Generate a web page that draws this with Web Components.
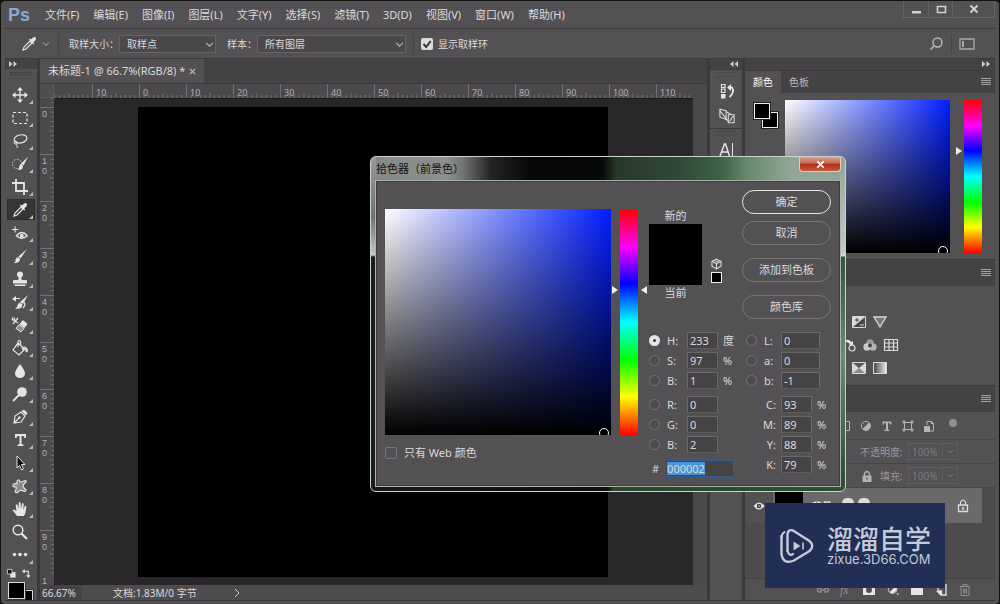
<!DOCTYPE html>
<html lang="zh-CN">
<head>
<meta charset="utf-8">
<title>Photoshop</title>
<style>
html{background:#141314}
body{margin:0;font:11px/16px "Noto Sans","Noto Sans CJK SC",sans-serif;color:#dcdadc;
--panel:#535154;--dark:#444245;--line:#3b393c;--field:#474548;--edge:#6a686b}
</style>
</head>
<body>
<ps-app>
  <ps-menubar slot="menu"></ps-menubar>
  <ps-options slot="options"></ps-options>
  <ps-tools></ps-tools>
  <ps-document></ps-document>
  <ps-dock></ps-dock>
  <ps-panels></ps-panels>
</ps-app>
<ps-picker-dialog heading="拾色器（前景色）"></ps-picker-dialog>
<site-badge></site-badge>
<script>
const ICONS={
 dropper:['0 0 16 16','<path d="M2 14l1-3 6-6 2 2-6 6z" fill="none" stroke="#e6e4e6" stroke-width="1.2"/><path d="M8 3.500l1-1 1 1 2-2q2-1 2.800.3t-.6 2.600l-2 2 1 1-1 1z" fill="#e6e4e6"/>'],
 move:['0 0 16 16','<path d="M8 1v14M1 8h14" stroke="#e6e4e6" stroke-width="1.300"/><path d="M8 0l3 3.500H5zM8 16l3-3.500H5zM0 8l3.500-3v6zM16 8l-3.500-3v6z" fill="#e6e4e6"/>'],
 marquee:['0 0 16 16','<rect x="1" y="2.500" width="14" height="11" fill="none" stroke="#e6e4e6" stroke-width="1.200" stroke-dasharray="3 2"/>'],
 lasso:['0 0 16 16','<ellipse cx="8.500" cy="6" rx="6.500" ry="4" transform="rotate(-12 8 6)" fill="none" stroke="#e6e4e6" stroke-width="1.200"/><path d="M3 8q-2 2 0 3t2-1-2-2M4 11q2 1 1 4" fill="none" stroke="#e6e4e6"/>'],
 quick:['0 0 16 16','<circle cx="5" cy="8" r="4.600" fill="none" stroke="#e6e4e6" stroke-dasharray="1.500 1.500"/><path d="M16 1l-4.500 8.500L9 7.500z" fill="#e6e4e6"/><path d="M8.500 8l2.500 2q0 4.500-5.500 4 2-1 1.500-3z" fill="#e6e4e6"/>'],
 crop:['0 0 16 16','<path d="M4 0v12h12M0 4h12v12" fill="none" stroke="#e6e4e6" stroke-width="1.800"/>'],
 heal:['0 0 18 16','<path d="M0 4h7M3.500 0.500v7" stroke="#e6e4e6" stroke-width="1.200"/><path d="M5 11q6-7 12 0-6 6-12 0z" fill="none" stroke="#e6e4e6" stroke-width="1.600"/><circle cx="11" cy="11" r="2.200" fill="#e6e4e6"/>'],
 brush:['0 0 16 16','<path d="M15 1L8.500 10.500 6.500 8.500z" fill="#e6e4e6"/><path d="M6 9l2 2q0 4.500-6.500 4Q4 14 3.500 11.500 4 9.500 6 9z" fill="#e6e4e6"/>'],
 stamp:['0 0 16 16','<circle cx="8" cy="3.500" r="3" fill="#e6e4e6"/><path d="M7 5h2l.7 4H14q1 0 1 1v2.500H1V10q0-1 1-1h4.300zM2.500 13.500h11V15h-11z" fill="#e6e4e6"/>'],
 history:['0 0 16 16','<path d="M16 1l-5 9-3-2z" fill="#e6e4e6"/><path d="M7.500 8.500l3 2q0 4.500-7.500 4.500 3-2 2.500-4z" fill="#e6e4e6"/><path d="M3 4.500h5M12 8q2 3-1 6" stroke="#e6e4e6" fill="none" stroke-width="1.200"/><path d="M0 5l4-3v5.500z" fill="#e6e4e6"/>'],
 eraser:['0 0 16 16','<path d="M0 2l6 4M6 1L1 7" stroke="#e6e4e6" stroke-width="1.200"/><circle cx="1.500" cy="2" r="1.400" fill="none" stroke="#e6e4e6"/><path d="M11 3l4.500 4-3 4L7.500 7z" fill="#e6e4e6"/><path d="M7 7.500l5 4-3 3.500-5-3.500z" fill="#8f8d8f" stroke="#e6e4e6"/>'],
 bucket:['0 0 16 16','<path d="M6 3l7 6-6 6-6-5zM6 7V1.500q1.500-2 2.500 0V6" fill="none" stroke="#e6e4e6" stroke-width="1.200"/><path d="M9 7l4 2-2 2zM12 6q5 2 3.500 6-2 1-2-1t-1.500-5z" fill="#e6e4e6"/>'],
 drop:['0 0 16 16','<path d="M8 1q5 6.500 5 9.500a5 4.500 0 01-10 0Q3 7.500 8 1z" fill="#e6e4e6"/>'],
 dodge:['0 0 16 16','<circle cx="10" cy="6" r="4.800" fill="#e6e4e6"/><path d="M7 9l-6 6" stroke="#e6e4e6" stroke-width="1.800"/>'],
 pen:['0 0 16 16','<path d="M2 14l1-7 6-4 4 4-4 6zM2 14l5-5" fill="none" stroke="#e6e4e6" stroke-width="1.200"/><path d="M9.500 2L12 .5 15.500 4 14 6.500z" fill="#e6e4e6"/><circle cx="7.500" cy="8.500" r="1.200" fill="#e6e4e6"/>'],
 type:['0 0 16 16','<path d="M3 2h11v4h-1.500q0-2-1.700-2H9.500v8.300l2 .4V14H5.500v-1.300l2-.4V4H6.200Q4.500 4 4.500 6H3z" fill="#e6e4e6"/>'],
 arrow:['0 0 16 16','<path d="M5 1l8 8.500H9.500L11.500 14l-2 1-2-4.500L5 13z" fill="#100f10" stroke="#e6e4e6"/>'],
 shape:['0 0 16 16','<path d="M5 3q2-3 3 1 2 0 4-1 3-1 2 1l-3 3q0 3 3 5 0 3-5 0-1 0-3 2t-3-1q2-3 1-4-4 0-3-2t4-1z" fill="#8b898b" stroke="#e6e4e6" stroke-width="1.100"/>'],
 hand:['0 0 16 16','<path d="M5 15Q3 12 .8 9.500q0-1.500 1.700-.8L4.500 10 3.700 4q.8-1.500 1.800 0L6.500 8 6.800 1.500q1-1.200 1.800 0L9 8l1-5.500q1-1 1.700.2L11.300 9l1.500-4q1.200-.6 1.500.5Q14 12 12 15z" fill="#e6e4e6"/>'],
 zoom:['0 0 16 16','<circle cx="6" cy="6" r="4.800" fill="none" stroke="#e6e4e6" stroke-width="1.500"/><path d="M9.500 9.500l5.500 5.500" stroke="#e6e4e6" stroke-width="2.200"/>'],
 more:['0 0 16 16','<circle cx="2.500" cy="7.500" r="1.800" fill="#e6e4e6"/><circle cx="8" cy="7.500" r="1.800" fill="#e6e4e6"/><circle cx="13.500" cy="7.500" r="1.800" fill="#e6e4e6"/>'],
 search:['0 0 16 16','<circle cx="9.500" cy="6.500" r="4.500" fill="none" stroke="#bbb9bb" stroke-width="1.400"/><path d="M6 10l-3.500 3.500" stroke="#bbb9bb" stroke-width="1.600"/>'],
 layout:['0 0 16 16','<path d="M1 3h14v10H1z" fill="none" stroke="#a9a7a9" stroke-width="1.300"/><path d="M3 5h2v6H3z" fill="#a9a7a9"/>'],
 chevron:['0 0 8 8','<path d="M1 2.500l3 3 3-3" fill="none" stroke="#b5b3b5"/>'],
 next:['0 0 8 12','<path d="M2 2l4 4-4 4" fill="none" stroke="#c9c7c9"/>'],
 check:['0 0 12 12','<path d="M2.500 6l2.700 3 4.500-6" fill="none" stroke="#3a383a" stroke-width="2"/>'],
 menu:['0 0 10 10','<path d="M0 1.500h10M0 3.500h10M0 5.500h10M0 7.500h10" stroke="#a5a3a5" shape-rendering="crispEdges"/>'],
 right:['0 0 8 6','<path d="M0 0v6l3.500-3zM4.500 0v6L8 3z" fill="#cfcdcf"/>'],
 left:['0 0 8 6','<path d="M3.500 0v6L0 3zM8 0v6L4.500 3z" fill="#cfcdcf"/>'],
 mini:['0 0 10 10','<path d="M3.500 3.500h6v6h-6z" fill="#e6e4e6"/><path d="M.5.500h5v5h-5z" fill="#111" stroke="#cfcdcf"/>'],
 swap:['0 0 10 10','<path d="M2 2.500h5V8" fill="none" stroke="#e6e4e6" stroke-width="1.300"/><path d="M0 2.500L3 0v5zM7 10L4.500 7h5z" fill="#e6e4e6"/>'],
 actions:['0 0 16 16','<path d="M2.500 1.500h3.500v3H2.500zM2.500 6h3.500v3.500H2.500z" fill="none" stroke="#e6e4e6" stroke-width="1.200"/><path d="M2 11h4.500v4.500H2z" fill="#e6e4e6"/><path d="M9 4.500h4Q16 9 10.500 14" fill="none" stroke="#e6e4e6" stroke-width="1.800"/><path d="M8 4.500L12 1v7z" fill="#e6e4e6"/>'],
 swatches:['0 0 18 18','<path d="M1 1.500l7 1.500v10l-7-3zM10.500 7.500h6.500v9h-6.500zM8 4l6 3.500M1 3l7 9 3 4M12 15l4-6" fill="none" stroke="#dcdadc" stroke-width="1.200"/>'],
 glyph:['0 0 16 16','<path d="M1 14L5.500 2h1L10.500 14M3 10h6" fill="none" stroke="#e6e4e6" stroke-width="1.500"/><path d="M13.500 1v14" stroke="#e6e4e6"/>'],
 expo:['0 0 14 12','<path d="M.5.500h13v11H.5z" fill="#4a484b" stroke="#dcdadc"/><path d="M1 11V1h12z" fill="#dcdadc"/><path d="M3 4h4M5 2v4" stroke="#444"/><path d="M8 9h4" stroke="#ddd"/>'],
 vibrance:['0 0 14 12','<path d="M1 1h12L7 11z" fill="#777577" stroke="#d8d6d8" stroke-width="1.400"/>'],
 balance:['0 0 12 12','<path d="M2 2q4-3 6 1l2-1v5l-4-1 1-1z" fill="#e6e4e6"/><circle cx="9" cy="9" r="3" fill="none" stroke="#dcdadc" stroke-width="1.200"/>'],
 mixer:['0 0 16 14','<circle cx="8" cy="4.500" r="4.300" fill="#9b999b"/><circle cx="4.500" cy="9.300" r="4.300" fill="#d8d6d8" opacity=".9"/><circle cx="11.500" cy="9.300" r="4.300" fill="#bdbbbd" opacity=".9"/><circle cx="8" cy="7.500" r="2.300" fill="#454345"/>'],
 grid:['0 0 14 12','<path d="M.5.500h13v11H.5zM.5 4h13M.5 8h13M5 .5v11M9.500.500v11" fill="none" stroke="#dcdadc" stroke-width="1.200"/>'],
 selective:['0 0 14 12','<path d="M.5.500h13v11H.5z" fill="#8a888a" stroke="#dcdadc"/><path d="M1 1v10l6-5zM13 1v10L7 6z" fill="#dcdadc"/><path d="M1 1h12L7 6z" fill="#5a585a"/>'],
 gradmap:['0 0 14 12','<defs><linearGradient id="g"><stop stop-color="#454345"/><stop offset="1" stop-color="#eee"/></linearGradient></defs><path d="M.5.500h13v11H.5z" fill="url(#g)" stroke="#dcdadc"/>'],
 adj:['0 0 12 12','<circle cx="6" cy="6" r="4.500" fill="none" stroke="#b5b3b5"/><path d="M2.500 9L9 2.500A4.500 4.500 0 012.500 9z" fill="#b5b3b5"/>'],
 typef:['0 0 12 12','<path d="M1.500 1.500h9v3H9.300Q9 3 8 3H7v6.500l1.500.5v1h-5v-1L5 9.500V3H4Q3 3 2.700 4.500H1.500z" fill="#b5b3b5"/>'],
 transform:['0 0 12 12','<path d="M2.500 2.500h7v7h-7zM1 1h2v2H1zM9 1h2v2H9zM1 9h2v2H1zM9 9h2v2H9z" fill="none" stroke="#b5b3b5"/>'],
 smart:['0 0 12 12','<path d="M4 5V1.500h4.500l2 2V11H7" fill="none" stroke="#b5b3b5"/><path d="M1 6h6v6H1zM8 1v3h3z" fill="#b5b3b5"/>'],
 imagef:['0 0 12 12','<path d="M1.500 1.500h9v9h-9z" fill="none" stroke="#b5b3b5"/>'],
 lockf:['0 0 12 12','<path d="M1.500 5.500h9V12h-9z" fill="#b5b3b5"/><path d="M3.500 6V3.500q2.500-4 5 0V6" fill="none" stroke="#b5b3b5" stroke-width="1.400"/><path d="M6 7.500V10" stroke="#555"/>'],
 locko:['0 0 12 14','<path d="M1.500 6h9v6.500h-9z" fill="none" stroke="#dcdadc" stroke-width="1.300"/><path d="M3.500 6V3q2.500-4 5 0v3" fill="none" stroke="#dcdadc" stroke-width="1.200"/><path d="M6 8v3" stroke="#dcdadc" stroke-width="1.500"/>'],
 eye:['0 0 12 10','<path d="M.5 5Q6-2 11.500 5 6 12 .5 5z" fill="#e6e4e6"/><circle cx="6" cy="5" r="2.300" fill="#434143"/><circle cx="6" cy="5" r=".8" fill="#ddd"/>'],
 link:['0 0 14 12','<path d="M6 4H3.500a2 2 0 000 4H6M8 4h2.500a2 2 0 010 4H8M4 6h6" fill="none" stroke="#918f91" stroke-width="1.300"/>'],
 mask:['0 0 14 12','<path d="M1 1h12v10H1z" fill="#e6e4e6"/><circle cx="7" cy="6" r="3" fill="#504e51"/>'],
 adjw:['0 0 14 14','<circle cx="6.500" cy="6" r="5" fill="none" stroke="#e6e4e6"/><path d="M3 9.500L10 2.500A5 5 0 013 9.500zM11 11h3l-1.500 2z" fill="#e6e4e6"/>'],
 folder:['0 0 14 12','<path d="M1 1h5l1 1.500h6V11H1z" fill="#e6e4e6"/>'],
 newl:['0 0 12 12','<path d="M3 1h8v10H6.500V7H3z" fill="none" stroke="#e6e4e6" stroke-width="1.300"/><path d="M1 7h5v5z" fill="#e6e4e6"/>'],
 trash:['0 0 12 12','<path d="M1 2.500h10M4 2V.5h4V2M2 3v8.500h8V3M4.500 4.500v5M6 4.500v5M7.500 4.500v5" fill="none" stroke="#918f91"/>'],
 cube:['0 0 12 12','<path d="M6 .7l5 2.300v5.500L6 11.300 1 8.500V3zM1 3l5 2.500L11 3M6 5.500v5.800M3.500 2l5 2" fill="none" stroke="#dcdadc" stroke-width="1.200"/>'],
 min:['0 0 12 12','<path d="M2 8h9v2.500H2z" fill="#d2d0d2"/>'],
 max:['0 0 12 12','<path d="M2.500 3.500h8v6h-8z" fill="none" stroke="#d2d0d2" stroke-width="1.600"/>'],
 close:['0 0 12 12','<path d="M2.500 2.500l7 7M9.500 2.500l-7 7" stroke="#d2d0d2" stroke-width="1.800"/>'],
 logo:['0 0 36 38','<path d="M8.500 24V7Q9 2 14 3.500L30.500 14q5.500 5 0 10L15 33.500Q4 38 2.500 27V9" fill="none" stroke="#c3cad9" stroke-width="2.400" stroke-linecap="round"/><path d="M8.500 24q1.500 5.500 5.500 3" fill="none" stroke="#c3cad9" stroke-width="2.200" stroke-linecap="round"/><path d="M2.500 11q0-4 3-6" fill="none" stroke="#c3cad9" stroke-width="2" stroke-linecap="round"/><path d="M14.500 14.500l7 4.500-7 4.500z" fill="#c3cad9"/><path d="M24 15.500v7" stroke="#c3cad9" stroke-width="1.600"/>']
};
const define=(name,css,html,init)=>customElements.define(name,class extends HTMLElement{
  constructor(){
    super();
    const t=document.createElement('template');
    t.innerHTML='<style>*{box-sizing:border-box}button,input,select{font:inherit;color:inherit;margin:0}button{border:0;padding:0;background:none}'+css+'</style>'+(typeof html==='function'?html(this):html);
    this.attachShadow({mode:'open'}).append(t.content.cloneNode(true));
    if(init)init(this.shadowRoot,this);
  }
});
const ic=(n,s='')=>`<ps-icon name="${n}" ${s?`style="${s}"`:''}></ps-icon>`;

define('ps-icon',':host{display:inline-block;width:16px;height:16px;flex:none}svg{display:block;width:100%;height:100%;overflow:visible}',
 h=>{const i=ICONS[h.getAttribute('name')];return `<svg viewBox="${i[0]}" aria-hidden="true">${i[1]}</svg>`});

define('ps-app',`:host{display:flex;flex-direction:column;min-height:100vh;box-sizing:border-box;border:1px solid #141314;border-radius:5px;background:var(--panel);padding:0 4px 3px}
.work{flex:1;display:grid;grid-template-columns:32px minmax(0,1fr) 32px 250px;gap:3px;background:var(--line);border-bottom:1px solid var(--line)}`,
 '<slot name="menu"></slot><slot name="options"></slot><main class="work"><slot></slot></main>');

define('ps-menubar',`:host{display:flex;height:28px;box-sizing:border-box;border-bottom:1px solid var(--line);align-items:center}
b{font:bold 18px/26px "Liberation Sans",sans-serif;color:#86abd6;width:40px;padding-left:3px;box-sizing:border-box}
nav{display:flex;gap:14px;flex:1}
.win{display:flex;align-self:flex-start;border:1px solid #666467;border-top:0}
.win button{width:24px;height:16px;display:grid;place-items:center}.win button+button{border-left:1px solid #666467}.win button:last-child{width:42px}`,
 `<b>Ps</b><nav>${['文件(F)','编辑(E)','图像(I)','图层(L)','文字(Y)','选择(S)','滤镜(T)','3D(D)','视图(V)','窗口(W)','帮助(H)'].map(m=>`<button>${m}</button>`).join('')}</nav>
 <div class="win">${[['min','最小化'],['max','最大化'],['close','关闭']].map(([n,l])=>`<button aria-label="${l}">${ic(n,'width:12px;height:12px')}</button>`).join('')}</div>`);

define('ps-select',`:host{display:block;position:relative;height:18px}
select{appearance:none;width:100%;height:18px;padding:0 7px;border:1px solid #646265;background:#4a484b;border-radius:0;display:block}
ps-icon{position:absolute;right:2px;top:5px;width:9px;height:9px;pointer-events:none}`,
 h=>`<select aria-label="${h.getAttribute('label')}"><option>${h.getAttribute('value')}</option></select>${ic('chevron')}`);

define('ps-options',`:host{display:flex;align-items:center;height:30px;box-sizing:border-box;border-bottom:1px solid var(--line);font-size:10px;padding:0 16px}
i{width:1px;height:20px;background:#444245}
.check{display:flex;align-items:center;gap:5px}
.tick{position:relative;width:12px;height:12px}
.tick input{appearance:none;width:12px;height:12px;background:#dcdadc;border-radius:2px;display:block}
.tick ps-icon{position:absolute;left:0;top:0;width:12px;height:12px;pointer-events:none}
.sp{flex:1}span.l{white-space:nowrap}`,
 `${ic('dropper')}${ic('chevron','width:8px;height:8px;margin-left:5px')}<i style="margin:0 10px 0 8px"></i>
 <span class="l">取样大小：</span><ps-select label="取样大小" value="取样点" style="width:97px"></ps-select>
 <span class="l" style="margin-left:11px">样本：</span><ps-select label="样本" value="所有图层" style="width:149px"></ps-select>
 <i style="margin:0 7px"></i><label class="check"><span class="tick"><input type="checkbox" checked>${ic('check')}</span>显示取样环</label>
 <span class="sp"></span>${ic('search')}<i style="margin:0 7px"></i>${ic('layout')}<span style="width:4px"></span>`);

define('ps-tools',`:host{display:flex;flex-direction:column;background:var(--panel)}
.head{height:10px;background:var(--dark);padding:2px 4px;line-height:0}
.grip{width:22px;height:3px;margin:3px 5px 8px;border-top:1px dotted #3b393c;border-bottom:1px dotted #3b393c}
button{height:23px;display:block;padding:3px 7px;position:relative;width:100%}
button.on::before{content:"";position:absolute;inset:1px 2px;background:#373538;border:1px solid #2f2d30;z-index:0}
button ps-icon{position:relative;display:block}
button::after{content:"";position:absolute;right:4px;bottom:2px;border:solid transparent;border-width:2px;border-right-color:#bbb;border-bottom-color:#bbb}
button.zoom::after{display:none}
.mini{display:flex;gap:6px;padding:3px 2px 0}.mini ps-icon{width:9px;height:9px}
.sw{position:relative;height:18px;margin:4px 0 0 3px;overflow:hidden}
.sw span{position:absolute;left:0;top:0;width:17px;height:17px;border:1px solid #dcdadc;background:#000;outline:1px solid #353335}
.sw span:first-child{left:14px;top:8px;width:11px}`,
 `<div class="head">${ic('right','width:8px;height:6px')}</div><div class="grip"></div>
 ${[['move','移动'],['marquee','矩形选框'],['lasso','套索'],['quick','快速选择'],['crop','裁剪'],['dropper','吸管'],['heal','红眼'],['brush','画笔'],['stamp','仿制图章'],['history','历史记录画笔'],['eraser','橡皮擦'],['bucket','油漆桶'],['drop','模糊'],['dodge','减淡'],['pen','钢笔'],['type','文字'],['arrow','路径选择'],['shape','自定形状'],['hand','抓手'],['zoom','缩放'],['more','更多']].map(([n,l])=>`<button aria-label="${l}" class="${n==='dropper'?'on':n}">${ic(n)}</button>`).join('')}
 <div class="mini">${ic('mini')}${ic('swap')}</div><div class="sw"><span></span><span></span></div>`);

define('ps-ruler',`:host{display:flex;overflow:hidden;background:#4b494c;color:#b3b1b3;font-size:9px;line-height:9px;min-width:0;min-height:0}
:host([axis=y]){flex-direction:column;height:0;min-height:100%;font:9px/10px "Liberation Sans",sans-serif}
div{position:relative;flex:none}
:host([axis=x]) div{width:47px;height:14px;padding:4px 0 0 4px}
:host([axis=x]) div:first-of-type{width:38px}
:host([axis=y]) div{height:47px;width:14px;padding:2px 0 0 2px}
:host([axis=y]) div:first-of-type{height:9px}
:host([axis=y]) div:last-of-type{height:9px;padding-top:0;line-height:9px}
:host([axis=y]) div:last-of-type svg{display:none}
svg{position:absolute;right:0;bottom:0}
:host([axis=x]) svg{width:47px;height:14px}:host([axis=y]) svg{width:14px;height:47px}
:host([axis=y]) span{display:block}`,
 h=>{const x=h.getAttribute('axis')==='x';
  const ticks=[...Array(10)].map((_,i)=>{const p=i*10+1,l=i===0?14:i===5?5:3;return x?`M${p} ${14-l}V14`:`M${14-l} ${p}H14`}).join('');
  const svg=`<svg viewBox="${x?'0 0 100 14':'0 0 14 100'}" preserveAspectRatio="none" aria-hidden="true"><path d="${ticks}" stroke="#747275" fill="none" vector-effect="non-scaling-stroke"/></svg>`;
  return (x?['',10,0,10,20,30,40,50,60,70,80,90,100,110]:['',0,10,20,30,40,50,60,70,80,90,'1']).map(v=>`<div>${svg}${x?v:String(v).split('').map(c=>`<span>${c}</span>`).join('')}</div>`).join('')});

define('ps-document',`:host{display:flex;flex-direction:column;background:#4b494c;min-width:0}
.tabs{height:25px;background:var(--dark);display:flex;border-bottom:1px solid var(--line)}
.tabs div{display:flex;align-items:center;background:var(--panel);padding:0 7px 0 8px;gap:3px;white-space:nowrap}
.tabs ps-icon{width:9px;height:9px;display:block}
.view{flex:1;display:grid;grid-template:14px minmax(0,1fr)/14px minmax(0,1fr) 14px}
.corner{background:#504e51;border:solid #5c5a5d;border-width:0 1px 1px 0}
.canvas{background:#29272a;border-top:1px solid #1b1a1c;padding:8px 84px 8px 84px;grid-column:2}
.art{background:#000;aspect-ratio:1;max-width:470px}
.status{display:flex;align-items:center;height:15px;background:#4e4c4f;font-size:10px;white-space:nowrap}
.status input{width:42px;height:15px;border:0;background:#454346;padding:0 0 0 2px}
.status span{margin-left:31px;width:120px}`,
 `<div class="tabs"><div>未标题-1 @ 66.7%(RGB/8) *<button aria-label="关闭文档">${ic('close','opacity:.8')}</button></div></div>
 <div class="view"><div class="corner"></div><ps-ruler axis="x"></ps-ruler><div></div><ps-ruler axis="y"></ps-ruler><div class="canvas"><div class="art"></div></div></div>
 <div class="status"><input aria-label="缩放" value="66.67%"><span>文档:1.83M/0 字节</span>${ic('next','width:8px;height:12px')}</div>`);

define('ps-dock',`:host{display:flex;flex-direction:column;background:var(--panel)}
.head{height:11px;background:var(--dark);padding:2px 4px;line-height:0;text-align:right;border-bottom:1px solid var(--line)}
section{padding:2px 0 4px;display:flex;flex-direction:column;align-items:center;gap:9px;border-bottom:1px solid var(--line)}
section::before{content:"";width:18px;height:3px;margin-bottom:-3px;border:dotted #434143;border-width:1px 0}
section:last-child{border:0}button{height:16px;padding-left:2px}`,
 `<div class="head">${ic('left','width:8px;height:6px')}</div><section><button aria-label="动作">${ic('actions')}</button><button aria-label="历史记录">${ic('swatches')}</button></section><section><button aria-label="字符">${ic('glyph')}</button></section>`);

define('ps-panel',`:host{display:block}
header{display:flex;justify-content:flex-end;height:var(--bar,26px);background:var(--dark);align-items:center;padding-right:4px;border-top:1px solid var(--line)}
.tabs{display:flex;flex:1;height:100%}ps-icon{width:10px;height:10px}`,
 `<header><div class="tabs"><slot name="tabs"></slot></div><button aria-label="面板菜单">${ic('menu','display:block')}</button></header><slot></slot>`);

define('color-field',`:host{display:block;position:relative;overflow:hidden;background:linear-gradient(to top,#000,transparent),linear-gradient(to right,#fff,#001eff)}
:host::after{content:"";position:absolute;right:2px;bottom:-3px;width:8px;height:8px;border:1px solid #fff;border-radius:50%}`,'');
define('hue-strip',`:host{display:block;position:relative;background:linear-gradient(red,#f0f 17%,#00f 33%,#0ff 50%,#0f0 67%,#ff0 83%,red)}
i{position:absolute;left:-8px;top:34%;border:4px solid transparent;border-left:6px solid #eee;border-right:0}
i+i{left:auto;right:-9px;border-left:0;border-right:6px solid #eee}
:host([single]) i{top:31%}:host([single]) i+i{display:none}`,'<i></i><i></i>');

define('ps-panels',`:host{display:flex;flex-direction:column;background:var(--panel);font-size:10px;min-width:0}
.head{height:11px;background:var(--dark);padding:2px 5px;line-height:0;text-align:right}
.tab{padding:0 8px;height:100%;color:#bdbbbd}.tab.on{background:var(--panel);color:#fff}
.color{display:flex;padding:7px 13px 5px 9px;height:166px}
.sw{position:relative;width:31px;height:28px;margin-top:3px}
.sw span{position:absolute;left:8px;top:9px;width:16px;height:16px;background:#000;border:1px solid #eee;outline:1px solid #222}.sw span+span{left:0;top:0}
color-field{flex:1;height:153px;margin-right:14px}hue-strip{width:18px;height:153px}
.adj{padding:24px 0 6px 97px;height:99px}
.adj div{display:flex;align-items:center;gap:7px;height:23px;padding-left:10px}
.adj div.wide{padding-left:0}.adj ps-icon{width:14px;height:12px}
.row{display:flex;align-items:center;height:24px;border-bottom:1px solid #474548;color:#98969a;padding-left:97px}
.filters{height:28px;gap:9px;padding-left:94px}.filters ps-icon,.row ps-icon{width:12px;height:12px}
.row label{width:48px;white-space:nowrap}
.row input{width:35px;height:17px;border:1px solid #5e5c5f;background:none;padding:0 3px;color:#7c7a7d}
.row button{width:15px;height:17px;border:1px solid #5e5c5f;border-left:0;display:grid;place-items:center}
.row button ps-icon{width:7px;height:7px;opacity:.5}
.list{flex:1;background:#4d4b4e;padding-right:13px}
.layer{height:35px;display:flex;align-items:center;background:#6a686b;padding-right:13px;color:#fff}
.layer .eye{align-self:stretch;width:28px;display:grid;place-items:center;background:#535154}
.thumb{width:28px;height:28px;background:#000;margin:0 9px 0 2px}
.foot{height:22px;border-top:1px solid #454346;display:flex;align-items:center;gap:10px;padding:0 23px 0 0;justify-content:flex-end}
.foot ps-icon{width:14px;height:12px}.fx{font:italic 12px/12px "Liberation Serif",serif;color:#918f91;width:12px}`,
 `<div class="head">${ic('right','width:8px;height:6px')}</div>
 <ps-panel style="--bar:23px"><button class="tab on" slot="tabs">颜色</button><button class="tab" slot="tabs">色板</button>
 <div class="color"><div class="sw"><span></span><span></span></div><color-field></color-field><hue-strip single></hue-strip></div></ps-panel>
 <ps-panel style="--bar:27px"><div class="adj"><div>${ic('expo')}${ic('vibrance')}</div><div class="wide">${ic('balance')}${ic('mixer')}${ic('grid')}</div><div>${ic('selective')}${ic('gradmap')}</div></div></ps-panel>
 <ps-panel style="--bar:27px"><div class="row filters">${ic('imagef')}${['adj','typef','transform','smart'].map(n=>ic(n)).join('')}<span style="width:8px;height:8px;border-radius:4px;background:#918f91;margin:0 0 6px 5px"></span></div>
 <div class="row" style="padding-left:115px"><label for="op">不透明度:</label><input id="op" value="100%"><button aria-label="不透明度选项">${ic('chevron')}</button></div>
 <div class="row" style="padding-left:116px">${ic('lockf')}<label for="fi" style="width:28px;margin-left:7px">填充:</label><input id="fi" value="100%"><button aria-label="填充选项">${ic('chevron')}</button></div></ps-panel>
 <div class="list"><div class="layer"><span class="eye">${ic('eye','width:12px;height:10px')}</span><span class="thumb"></span><span>背景</span><span style="flex:1"></span>${ic('locko','width:12px;height:14px')}</div></div>
 <div class="foot">${ic('link')}<span class="fx">fx</span>${['mask','adjw','folder','newl','trash'].map(n=>ic(n)).join('')}</div>`);

define('ps-channel',`:host{display:flex;align-items:center;height:17px}
input[type=radio]{appearance:none;width:11px;height:11px;border:1px solid #737174;border-radius:50%;background:#4d4b4e}
input[type=radio]:checked{background:#333;border:4px solid #e6e4e6}
.r{width:18px;display:flex}label{width:20px}:host([wide]) label{width:17px}
:host([plain]) label{text-align:right;padding-right:5px;width:35px}:host([plain]) .r{width:0}
input[type=text]{width:31px;height:17px;border:1px solid #69676a;border-bottom-color:#5c5a5d;background:#454346;padding:0 2px;border-radius:0}
:host([wide]) input[type=text]{width:39px}span.u{margin-left:5px}`,
 h=>{const n=h.getAttribute('label');return `<span class="r">${h.hasAttribute('plain')?'':`<input type="radio" aria-label="${n}" ${h.hasAttribute('checked')?'checked':''}>`}</span><label for="v">${n}:</label><input type="text" id="v" value="${h.getAttribute('value')}"><span class="u">${h.getAttribute('unit')||''}</span>`});

const ch=(l,v,u='',x='')=>`<ps-channel label="${l}" value="${v}" unit="${u}" ${x}></ps-channel>`;
define('ps-picker-dialog',`:host{position:absolute;left:37%;top:156px;width:476px;box-sizing:border-box;border:1px solid #c9d4ca;border-radius:6px;padding:0 4px 4px 4px;
background:linear-gradient(to right,#151815,#0d110e 50%,#28472c 51%,#2b5131) 0 100%/100% 5px no-repeat,
linear-gradient(#9a9a9a,#707270 60px,#c8c8c8 98px,#1b1d1b 100px) 0 0/5px 100% no-repeat,
linear-gradient(#90a595,#c3c7c8 95px,#d8d8d8 99px,#31563a 100px,#64916b 200px,#294b2e) 100% 0/5px 100% no-repeat,
linear-gradient(to right,#858785,#8e908e 75px,#777977 90px,#232524 120px,#060807 160px,#070a07 232px,#263829 245px,#31493a 310px,#3d6244 350px,#668869 375px,#91a697 420px,#91a697)}
header{height:23px;display:flex;justify-content:space-between;align-items:center;color:#111}
h2{font:inherit;margin:0 0 0 1px}
.x{align-self:flex-start;width:42px;height:15px;border:1px solid #e7c9c2;border-top:0;border-radius:0 0 4px 4px;background:linear-gradient(#dda093,#c96450 45%,#a92e17 50%,#cc5940);display:grid;place-items:center;margin-right:0}
.body{background:var(--panel);border:1px solid #aab5ab;outline:0;padding:9px 9px 7px 9px;display:flex;box-shadow:inset 0 0 0 1px #3e3c3f;min-height:307px;box-sizing:border-box}
.left{width:226px;margin:19px 9px 0 0}
color-field{height:226px}hue-strip{width:18px;height:226px;margin:19px 11px 0 0}
.web{display:flex;align-items:center;gap:7px;margin-top:10px}
.web input{appearance:none;width:12px;height:12px;border:1px solid #78767a;border-radius:2px}
.right{flex:1;display:flex;flex-direction:column}
.top{display:flex}
.pre{width:53px;text-align:center;margin-top:18px}.pre div{height:61px;background:#000}
.gam{width:40px;padding:68px 0 0 9px;line-height:0}.gam i{display:block;width:11px;height:11px;border:1px solid #eee;background:#000;margin-top:2px}
.btn{display:flex;flex-direction:column;gap:7px;width:89px}
.btn button{height:24px;border:1px solid #777578;border-radius:12px;line-height:20px}
.btn button:first-child{border-color:#e6e4e6}.btn button:nth-child(n+3){margin-top:6px}
.f{display:flex;margin-top:13px}.f>div{display:flex;flex-direction:column;gap:3px}
.f>div:first-child{width:97px}.f ps-channel.g{margin-top:4px}
.hex{display:flex;align-items:center;margin-top:4px;padding-left:3px;height:17px;gap:6px}
.hex input{width:69px;height:17px;border:1px solid #2f5c9c;padding:0 1px;background:linear-gradient(#4c94d2,#4c94d2) 1px 1px/38px 13px no-repeat #454346;flex:none}`,
 h=>`<header><h2>${h.getAttribute('heading')}</h2><button class="x" aria-label="关闭">${ic('close','width:11px;height:11px;filter:brightness(1.3)')}</button></header>
 <div class="body"><div class="left"><color-field></color-field><label class="web"><input type="checkbox">只有 Web 颜色</label></div><hue-strip></hue-strip>
 <div class="right"><div class="top"><div class="pre">新的<div></div>当前</div><div class="gam">${ic('cube','width:11px;height:12px')}<i></i></div>
 <div class="btn"><button>确定</button><button>取消</button><button>添加到色板</button><button>颜色库</button></div></div>
 <div class="f"><div>${ch('H','233','度','checked')}${ch('S','97','%')}${ch('B','1','%')}${ch('R','0','','class="g"')}${ch('G','0')}${ch('B','2')}<div class="hex"><label for="hex">#</label><input id="hex" value="000002"></div></div>
 <div>${ch('L','0','','wide')}${ch('a','0','','wide')}${ch('b','-1','','wide')}${ch('C','93','%','plain class="g"')}${ch('M','89','%','plain')}${ch('Y','88','%','plain')}${ch('K','79','%','plain')}</div></div></div></div>`);

define('site-badge',`:host{position:absolute;right:55px;top:503px;width:180px;height:85px;background:#212e56;color:#c3cad9;display:flex;align-items:center;gap:12px;padding-left:14px;box-sizing:border-box}
strong{display:block;font:500 26px/26px "Noto Sans CJK SC",sans-serif;white-space:nowrap}
a{display:block;font:13px/14px Inter,sans-serif;color:inherit;text-decoration:none;white-space:nowrap;margin-top:1px}
i{position:absolute;top:-5px;left:77px;width:12px;height:5px;border-radius:6px 6px 0 0;background:#dcdadc}i+i{left:93px}`,
 `<i></i><i></i>${ic('logo','width:36px;height:38px')}<div><strong>溜溜自学</strong><a href="#">zixue.3D66.COM</a></div>`);
</script>
</body>
</html>
